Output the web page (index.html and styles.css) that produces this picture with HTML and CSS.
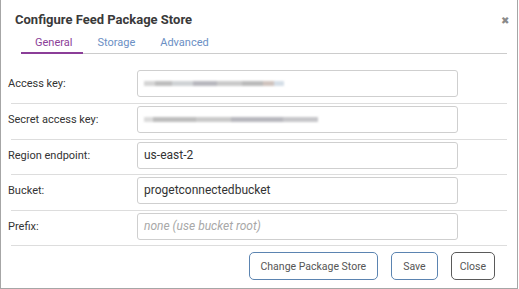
FILE: index.html
```html
<!DOCTYPE html>
<html>
<head>
<meta charset="utf-8">
<link rel="stylesheet" href="styles.css">
</head>
<body>
<div class="dialog">
  <div class="header">
    <h1 class="title">Configure Feed Package Store</h1>
    <span class="close-x">&#x2716;</span>
  </div>
  <div class="tabs">
    <span class="tab active">General</span>
    <span class="tab">Storage</span>
    <span class="tab">Advanced</span>
  </div>
  <div class="form">
    <div class="row">
      <label class="label">Access key:</label>
      <div class="input"><span class="blur blur1"></span></div>
    </div>
    <div class="row">
      <label class="label">Secret access key:</label>
      <div class="input"><span class="blur blur2"></span></div>
    </div>
    <div class="row">
      <label class="label">Region endpoint:</label>
      <div class="input">us-east-2</div>
    </div>
    <div class="row">
      <label class="label">Bucket:</label>
      <div class="input">progetconnectedbucket</div>
    </div>
    <div class="row">
      <label class="label">Prefix:</label>
      <div class="input placeholder">none (use bucket root)</div>
    </div>
  </div>
  <div class="footer">
    <button class="btn">Change Package Store</button>
    <button class="btn">Save</button>
    <button class="btn btn-close">Close</button>
  </div>
</div>
</body>
</html>
```
FILE: styles.css
```css
* { box-sizing: border-box; }
html, body { margin: 0; padding: 0; background: #fff; }
body { font-family: Roboto, "Liberation Sans", sans-serif; color: #333; }
.dialog {
  width: 518px;
  height: 289px;
  border: 1px solid #a6a6a6;
  border-top: none;
  padding: 0 10px 0 10px;
}
.header {
  display: flex;
  justify-content: space-between;
  align-items: center;
  height: 33px;
  padding: 6px 0 0 4px;
}
.title {
  margin: 0;
  font-size: 13px;
  font-weight: bold;
  color: #3a3a3a;
}
.close-x {
  font-size: 10px;
  color: #8a8a8a;
  margin-right: -2px;
  margin-top: 1px;
}
.tabs {
  display: flex;
  margin: 0 0 0 10px;
  border-bottom: 1px solid #cccccc;
  height: 21px;
  padding-top: 2px;
}
.tab {
  font-size: 11px;
  color: #6b8fc4;
  padding: 0 11px 0 14px;
  line-height: 16px;
}
.tab.active {
  color: #8b3e98;
  border-bottom: 2px solid #8b3e98;
  margin-bottom: -1px;
}
.form {
  padding-top: 14px;
}
.row {
  display: flex;
  align-items: center;
  height: 36px;
  border-bottom: 1px solid #dddddd;
  padding-bottom: 4px;
}
.row:nth-child(3), .row:nth-child(5) { height: 35px; }
.label {
  width: 129px;
  font-size: 11px;
  color: #333;
  margin-left: -3px;
}
.input {
  width: 321px;
  height: 27px;
  border: 1px solid #cfcfcf;
  border-radius: 3px;
  padding: 0 6px;
  font-size: 12px;
  line-height: 25px;
  color: #333;
  display: flex;
  align-items: center;
}
.placeholder { color: #a8a8a8; font-style: italic; }
.blur {
  display: block;
  height: 5px;
  filter: blur(1px);
  opacity: 0.75;
}
.blur1 {
  width: 140px;
  background: linear-gradient(90deg, #c8c8c8 0 8%, #a8a8a8 8% 20%, #c0c4c8 20% 35%, #a0a0a8 35% 52%, #b8b8b8 52% 70%, #a4a4a4 70% 85%, #c0b0a8 85% 93%, #c8d4e0 93% 100%);
}
.blur2 {
  width: 174px;
  background: linear-gradient(90deg, #d0d0d0 0 5%, #a8a8a8 5% 30%, #b8b8b8 30% 50%, #a0a0a8 50% 80%, #b4b4b8 80% 100%);
}
.footer {
  display: flex;
  justify-content: flex-end;
  gap: 13px;
  padding: 6px 12px 0 0;
}
.btn {
  font-family: Roboto, "Liberation Sans", sans-serif;
  font-size: 10.5px;
  color: #555;
  background: #fff;
  border: 1px solid #5b84b1;
  border-radius: 5px;
  height: 28px;
  padding: 0 11px;
}
.btn-close { border-color: #5a5a5a; padding: 0 8px; }
```
